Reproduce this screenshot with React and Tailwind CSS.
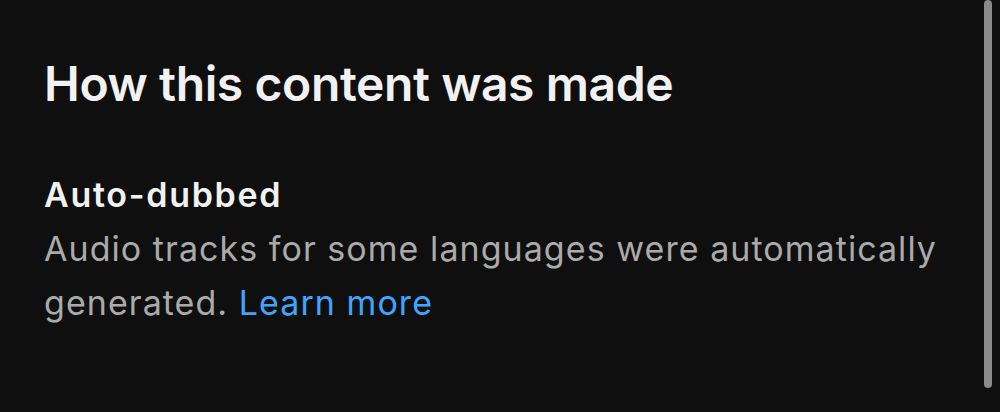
export default function App() {
  return (
    <div className="relative h-[412px] w-[1000px] overflow-hidden bg-[#0f0f0f] font-['Inter',sans-serif]">
      <div className="pl-[44px] pr-[50px] pt-[56px]">
        <h1 className="text-[48px] leading-[56px] font-semibold text-[#f1f1f1] tracking-[-0.4px]">
          How this content was made
        </h1>
        <h2 className="mt-[61px] text-[34px] leading-[44px] font-semibold text-[#f1f1f1] tracking-[1.7px]">
          Auto-dubbed
        </h2>
        <p className="mt-[5px] text-[34px] leading-[54px] text-[#aaaaaa] tracking-[1.05px]">
          Audio tracks for some languages were automatically generated.{" "}
          <a className="text-[#3ea6ff]">Learn more</a>
        </p>
      </div>
      <div className="absolute left-[984px] top-0 h-[388px] w-[8px] rounded-full bg-[#8a8a8a]" />
    </div>
  );
}
